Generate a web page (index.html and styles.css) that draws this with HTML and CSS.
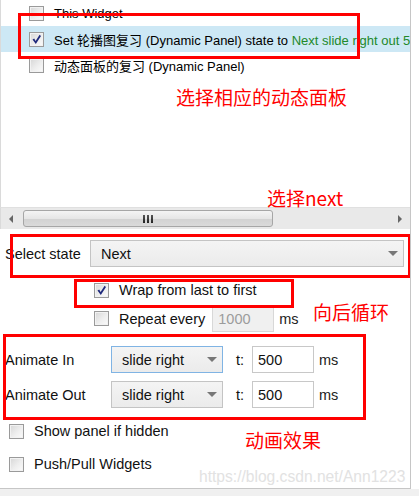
FILE: index.html
```html
<html>
<head>
<title>Set Panel State</title>
<link rel="stylesheet" href="styles.css">
</head>
<body>

<div class="panel">
  <div class="list">
    <div class="item">
      <span class="cb"></span>
      <span class="item-text">This Widget</span>
    </div>
    <div class="item selected">
      <span class="cb">
        <svg width="13" height="13" viewBox="0 0 13 13"><path d="M2.5 6.5 L4.2 5.6 L5.6 8 L9.6 1.8 L11 2.9 L5.8 11 Z" fill="#1f2a7c"/></svg>
      </span>
      <span class="item-text">Set 轮播图复习 (Dynamic Panel) state to <span class="green">Next slide right out 500ms</span></span>
    </div>
    <div class="item">
      <span class="cb"></span>
      <span class="item-text">动态面板的复习 (Dynamic Panel)</span>
    </div>
  </div>

  <div class="hscroll">
    <div class="arrow-left"></div>
    <div class="thumb"><i></i><i></i><i></i></div>
    <div class="arrow-right"></div>
  </div>

  <div class="form">
    <div class="row state-row">
      <span class="label state-label">Select state</span>
      <div class="select wide">Next<span class="caret"></span></div>
    </div>

    <div class="row check-row indent">
      <span class="cb">
        <svg width="13" height="13" viewBox="0 0 13 13"><path d="M2.5 6.5 L4.2 5.6 L5.6 8 L9.6 1.8 L11 2.9 L5.8 11 Z" fill="#1f2a7c"/></svg>
      </span>
      <span class="check-text">Wrap from last to first</span>
    </div>

    <div class="row repeat-row indent">
      <span class="cb"></span>
      <span class="check-text">Repeat every</span>
      <div class="input disabled">1000</div>
      <span class="unit">ms</span>
    </div>

    <div class="row anim-row">
      <span class="label anim-label">Animate In</span>
      <div class="select small hover">slide right<span class="caret"></span></div>
      <span class="t">t:</span>
      <div class="input">500</div>
      <span class="unit">ms</span>
    </div>

    <div class="row anim-row second">
      <span class="label anim-label">Animate Out</span>
      <div class="select small">slide right<span class="caret"></span></div>
      <span class="t">t:</span>
      <div class="input">500</div>
      <span class="unit">ms</span>
    </div>

    <div class="row check-row left">
      <span class="cb"></span>
      <span class="check-text">Show panel if hidden</span>
    </div>

    <div class="row check-row left last">
      <span class="cb"></span>
      <span class="check-text">Push/Pull Widgets</span>
    </div>
  </div>

  <!-- red annotations drawn over the dialog -->
  <div class="mark mark-row"></div>
  <div class="mark mark-state"></div>
  <div class="mark mark-wrap"></div>
  <div class="mark mark-anim"></div>

  <div class="note note1">选择相应的动态面板</div>
  <div class="note note2">选择next</div>
  <div class="note note3">向后循环</div>
  <div class="note note4">动画效果</div>
  <div class="watermark">https://blog.csdn.net/Ann1223</div>
</div>

<div class="footer"></div>

</body>
</html>
```

FILE: styles.css
```css
body {
  margin: 0;
  background: #fff;
  font-family: "Liberation Sans", "Noto Sans CJK SC", sans-serif;
  color: #000;
}

.panel {
  position: relative;
  width: 410px;
  height: 488px;
  border-right: 1px solid #c6c6c6;
  border-bottom: 1px solid #c6c6c6;
  overflow: hidden;
}

.footer {
  height: 7px;
  background: #f0f0f0;
}

/* list of widgets */
.list {
  height: 207px;
  border-left: 1px solid #dadada;
  overflow: hidden;
}

.item {
  display: flex;
  align-items: center;
  height: 26px;
  padding-left: 28px;
  font-size: 13px;
  white-space: nowrap;
}

.item.selected {
  background: #cde8f5;
}

.item-text {
  margin-left: 10px;
}

.green {
  color: #22882a;
}

.cb {
  display: flex;
  align-items: center;
  justify-content: center;
  flex: none;
  width: 13px;
  height: 13px;
  border: 1px solid #9a9a9a;
  background: linear-gradient(135deg, #d6d6d6 0%, #eeeeee 55%, #fbfbfb 100%);
  box-shadow: inset 0 0 0 1px #f2f2f2;
}

/* horizontal scrollbar */
.hscroll {
  display: flex;
  align-items: center;
  height: 21px;
  background: #e9e9e9;
  border-top: 1px solid #e0e0e0;
  border-left: 1px solid #dadada;
}

.arrow-left {
  width: 0;
  height: 0;
  margin-left: 8px;
  border-top: 4px solid transparent;
  border-bottom: 4px solid transparent;
  border-right: 4px solid #666;
}

.arrow-right {
  width: 0;
  height: 0;
  margin-left: auto;
  margin-right: 8px;
  border-top: 4px solid transparent;
  border-bottom: 4px solid transparent;
  border-left: 4px solid #666;
}

.thumb {
  display: flex;
  align-items: center;
  justify-content: center;
  gap: 2px;
  width: 248px;
  height: 15px;
  margin-left: 10px;
  border: 1px solid #a6a6a6;
  border-radius: 3px;
  background: linear-gradient(#f4f4f4, #e6e6e6 50%, #d2d2d2 51%, #dadada);
}

.thumb i {
  width: 2px;
  height: 8px;
  background: linear-gradient(#555, #222);
}

/* options form */
.form {
  padding-top: 11px;
  font-size: 14.5px;
  color: #111;
}

.row {
  display: flex;
  align-items: center;
}

.label {
  flex: none;
}

.state-row {
  height: 27px;
  padding-left: 5px;
}

.state-label {
  width: 85px;
}

.select {
  display: flex;
  align-items: center;
  box-sizing: border-box;
  height: 27px;
  padding-left: 10px;
  border: 1px solid #c4c4c4;
  background: linear-gradient(#f4f4f4, #ebebeb);
}

.select.wide {
  width: 314px;
}

.select.small {
  width: 112px;
}

.select.hover {
  border-color: #80b4e4;
}

.caret {
  width: 0;
  height: 0;
  margin-left: auto;
  margin-right: 5px;
  border-left: 5px solid transparent;
  border-right: 5px solid transparent;
  border-top: 5px solid #777;
}

.check-row {
  height: 22px;
}

.indent {
  padding-left: 94px;
}

.check-row.indent {
  margin-top: 12px;
}

.check-text {
  margin-left: 10px;
  white-space: nowrap;
}

.repeat-row {
  height: 27px;
  margin-top: 4px;
}

.input {
  display: flex;
  align-items: center;
  box-sizing: border-box;
  width: 62px;
  height: 27px;
  padding-left: 5px;
  border: 1px solid #c8c8c8;
  background: #fff;
}

.input.disabled {
  margin-left: 7px;
  background: #f0f0f0;
  border-color: #d8d8d8;
  color: #9c9c9c;
}

.unit {
  margin-left: 5px;
  color: #222;
}

.anim-row {
  height: 27px;
  margin-top: 14px;
  padding-left: 5px;
}

.anim-row.second {
  margin-top: 8px;
}

.anim-label {
  width: 106px;
}

.t {
  margin-left: 13px;
  width: 16px;
}

.check-row.left {
  margin-top: 12px;
  padding-left: 9px;
}

.check-row.last {
  margin-top: 11px;
}

/* annotations */
.mark {
  position: absolute;
  box-sizing: border-box;
  border: 3px solid #f00;
}

.mark-row {
  left: 18px;
  top: 13px;
  width: 342px;
  height: 46px;
}

.mark-state {
  left: 10px;
  top: 234px;
  width: 401px;
  height: 44px;
}

.mark-wrap {
  left: 74px;
  top: 279px;
  width: 220px;
  height: 29px;
}

.mark-anim {
  left: 3px;
  top: 334px;
  width: 363px;
  height: 86px;
}

.note {
  position: absolute;
  color: #f00;
  font-family: "Noto Sans CJK SC", sans-serif;
  font-size: 19px;
  line-height: 26px;
  white-space: nowrap;
}

.note1 { left: 176px; top: 84px; }
.note2 { left: 267px; top: 185px; }
.note3 { left: 313px; top: 299px; }
.note4 { left: 245px; top: 427px; }

.watermark {
  position: absolute;
  left: 199px;
  top: 466px;
  font-size: 15.6px;
  line-height: 22px;
  color: #e2e2e2;
  white-space: nowrap;
}
```
